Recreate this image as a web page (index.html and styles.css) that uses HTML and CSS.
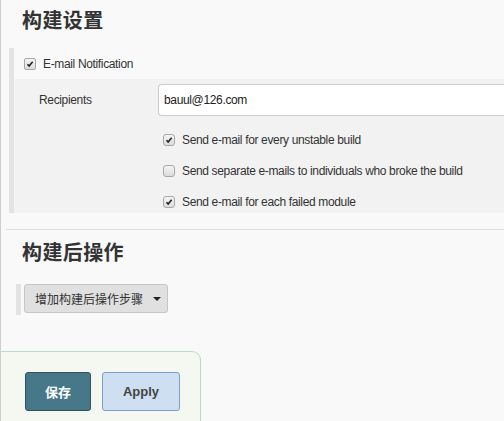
FILE: index.html
```html
<!DOCTYPE html>
<html lang="zh">
<head>
<meta charset="utf-8">
<link rel="stylesheet" href="styles.css">
</head>
<body>
<div class="page">
  <h2 class="title">构建设置</h2>
  <div class="section">
    <div class="section-head">
      <span class="cb checked"><svg viewBox="0 0 12 12"><path d="M3 6.2 L5 8.4 L9.2 3.4" /></svg></span>
      <span class="head-label">E-mail Notification</span>
    </div>
    <div class="nested">
      <div class="field">
        <div class="label">Recipients</div>
        <div class="input">bauul@126.com</div>
      </div>
      <div class="opt">
        <span class="cb round checked"><svg viewBox="0 0 12 12"><path d="M3 6.2 L5 8.4 L9.2 3.4" /></svg></span>
        <span>Send e-mail for every unstable build</span>
      </div>
      <div class="opt">
        <span class="cb round"></span>
        <span>Send separate e-mails to individuals who broke the build</span>
      </div>
      <div class="opt">
        <span class="cb round checked"><svg viewBox="0 0 12 12"><path d="M3 6.2 L5 8.4 L9.2 3.4" /></svg></span>
        <span>Send e-mail for each failed module</span>
      </div>
    </div>
  </div>
  <div class="sep"></div>
  <h2 class="title title2">构建后操作</h2>
  <div class="add-row">
    <div class="strip"></div>
    <div class="dropdown"><span>增加构建后操作步骤</span><span class="caret"></span></div>
  </div>
  <div class="bottom">
    <button class="btn save">保存</button>
    <button class="btn apply">Apply</button>
  </div>
</div>
</body>
</html>
```

FILE: styles.css
```css
html, body {
  margin: 0;
  padding: 0;
  height: 100%;
  overflow: hidden;
}
body {
  background: #f9f9f9;
  font-family: "Liberation Sans", Arial, "Noto Sans CJK SC", sans-serif;
  font-size: 12px;
  letter-spacing: -0.35px;
  color: #333;
}
.page {
  border-left: 1px solid #cfcfcf;
  min-height: 100%;
  box-sizing: border-box;
  display: flex;
  flex-direction: column;
}
.title {
  margin: 0;
  padding: 6px 0 0 21px;
  height: 48px;
  box-sizing: border-box;
  font-family: "Noto Sans CJK SC", sans-serif;
  font-size: 20px;
  line-height: 28px;
  letter-spacing: 0.4px;
  font-weight: bold;
  color: #333;
}
.section {
  margin-left: 8px;
  border-left: 5px solid #e3e3e3;
}
.section-head {
  height: 31px;
  display: flex;
  align-items: center;
  padding-left: 10px;
  background: #f9f9f9;
}
.head-label {
  margin-left: 7px;
}
.cb {
  width: 10px;
  height: 10px;
  border: 1px solid #a8a8a8;
  border-radius: 2px;
  background: linear-gradient(#f4f4f4, #dcdcdc);
  display: inline-flex;
  flex: none;
}
.cb svg {
  width: 10px;
  height: 10px;
  fill: none;
  stroke: #222;
  stroke-width: 1.9;
}
.cb.round {
  border-radius: 3px;
}
.nested {
  background: #f2f2f2;
  padding: 5px 0 0 0;
  height: 134px;
  box-sizing: border-box;
}
.field {
  display: flex;
  align-items: center;
  height: 32px;
  margin-bottom: 13px;
}
.label {
  width: 144px;
  padding-left: 25px;
  box-sizing: border-box;
  flex: none;
}
.input {
  flex: 1;
  height: 32px;
  box-sizing: border-box;
  border: 1px solid #cccccc;
  border-right: none;
  border-radius: 4px 0 0 4px;
  background: #fff;
  padding-left: 5px;
  line-height: 30px;
  color: #222;
  font-size: 12px;
}
.opt {
  display: flex;
  align-items: center;
  height: 22px;
  margin-bottom: 9px;
  padding-left: 149px;
}
.opt:last-child {
  margin-bottom: 0;
}
.opt .cb {
  margin-right: 7px;
}
.sep {
  margin-top: 16px;
  margin-left: 5px;
  border-top: 1px solid #dddddd;
}
.title2 {
  padding-top: 8px;
  height: 54px;
}
.add-row {
  display: flex;
  align-items: stretch;
  padding-left: 15px;
  height: 31px;
}
.strip {
  width: 5px;
  background: #e3e3e3;
  margin-right: 3px;
}
.dropdown {
  height: 29px;
  box-sizing: border-box;
  border: 1px solid #c6c6c6;
  border-radius: 3px;
  background: #e0e0e0;
  padding: 0 6px 0 10px;
  display: flex;
  align-items: center;
  font-family: "Noto Sans CJK SC", sans-serif;
  font-size: 12px;
  letter-spacing: 0;
  color: #333;
}
.caret {
  margin-left: 10px;
  width: 0;
  height: 0;
  border-left: 4px solid transparent;
  border-right: 4px solid transparent;
  border-top: 4px solid #222;
}
.bottom {
  margin-top: 36px;
  width: 200px;
  flex: 1;
  box-sizing: border-box;
  background: #f4f8f0;
  border: 1px solid #b8dbc6;
  border-left: none;
  border-bottom: none;
  border-radius: 0 9px 0 0;
  padding: 20px 0 0 24px;
  display: flex;
  align-items: flex-start;
  gap: 11px;
}
.btn {
  height: 39px;
  border-radius: 3px;
  font-family: "Noto Sans CJK SC", sans-serif;
  font-weight: bold;
  font-size: 13px;
  letter-spacing: 0;
  padding: 0;
}
.save {
  width: 66px;
  background: #467889;
  border: 1px solid #2e5260;
  color: #fff;
}
.apply {
  width: 78px;
  background: #cddff1;
  border: 1px solid #7b9fcb;
  color: #444;
  font-family: "Liberation Sans", Arial, sans-serif;
  font-size: 13px;
}
```
